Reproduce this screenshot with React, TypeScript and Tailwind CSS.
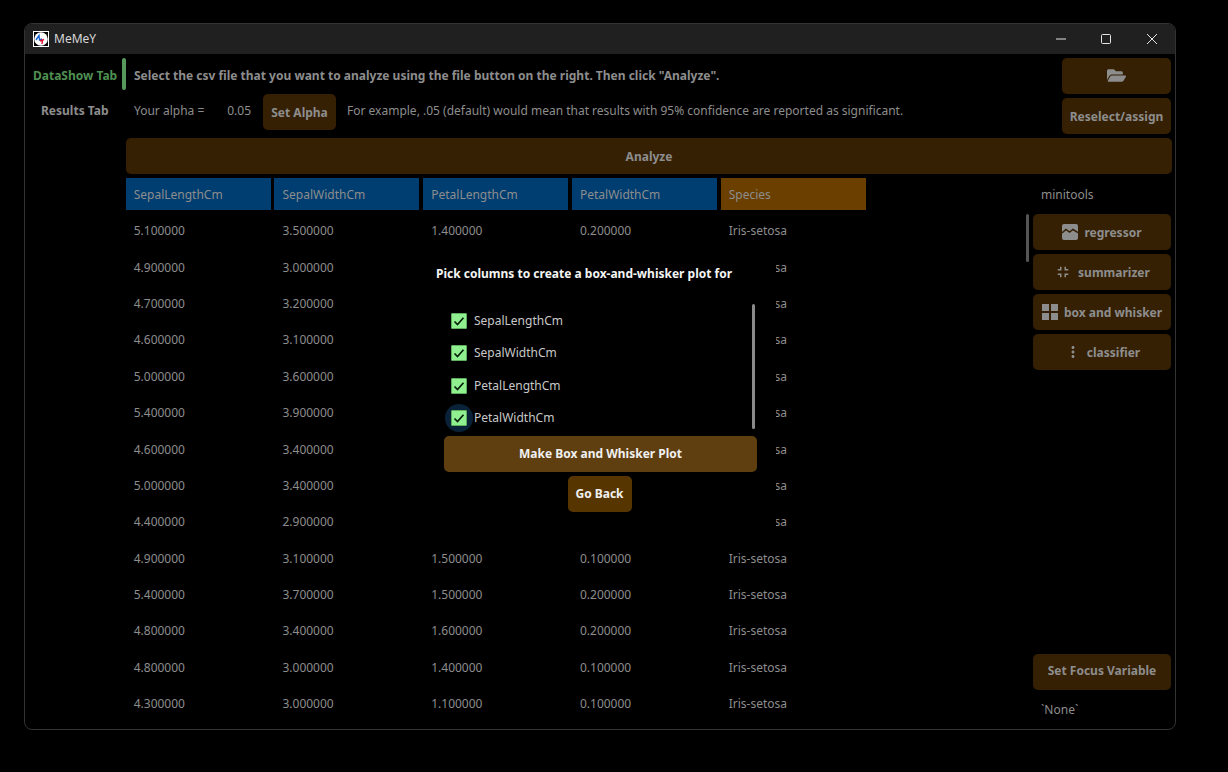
import { FaFolderOpen } from "react-icons/fa"
import { MdFullscreenExit, MdMoreVert } from "react-icons/md"
import type { ReactNode } from "react"

const columns = ["SepalLengthCm", "SepalWidthCm", "PetalLengthCm", "PetalWidthCm", "Species"]

// rows 1-8 have their petal values behind the dialog
const rows = [
  ["5.100000", "3.500000", "1.400000", "0.200000"],
  ["4.900000", "3.000000", "", ""],
  ["4.700000", "3.200000", "", ""],
  ["4.600000", "3.100000", "", ""],
  ["5.000000", "3.600000", "", ""],
  ["5.400000", "3.900000", "", ""],
  ["4.600000", "3.400000", "", ""],
  ["5.000000", "3.400000", "", ""],
  ["4.400000", "2.900000", "", ""],
  ["4.900000", "3.100000", "1.500000", "0.100000"],
  ["5.400000", "3.700000", "1.500000", "0.200000"],
  ["4.800000", "3.400000", "1.600000", "0.200000"],
  ["4.800000", "3.000000", "1.400000", "0.100000"],
  ["4.300000", "3.000000", "1.100000", "0.100000"],
]

function Logo() {
  return (
    <svg width="16" height="16" viewBox="0 0 16 16" className="shrink-0">
      <rect width="16" height="16" fill="#fff" />
      <rect x="1" y="1" width="14" height="14" fill="#000" />
      <circle cx="8" cy="8" r="6.8" fill="#fff" />
      <path d="M3 9 L6 4.5 L6.5 9 L9 8" stroke="#1763d0" strokeWidth="1.4" fill="none" />
      <path d="M7 10 L11 8.5 M9.5 9 L9 13" stroke="#e01030" strokeWidth="1.4" fill="none" />
    </svg>
  )
}

function ToolButton({ icon, label, gap }: { icon: ReactNode; label: string; gap: string }) {
  return (
    <button className={`h-9 w-full rounded-[5px] bg-[#352003] flex items-center justify-center font-bold text-[#8d8d8d] ${gap}`}>
      {icon}
      <span className="pt-[1px]">{label}</span>
    </button>
  )
}

function Check({ label, focused }: { label: string; focused?: boolean }) {
  return (
    <div className="flex h-[32.4px] items-center gap-[7px] pl-[7px]">
      <span className="relative flex h-4 w-4 items-center justify-center rounded-[1px] bg-[#90f090] border border-[#5fae5f]">
        {focused && <span className="absolute -inset-[7px] -z-10 rounded-full bg-[#0a2238]" />}
        <svg width="12" height="12" viewBox="0 0 12 12" className="relative">
          <path d="M1.5 6.5 L4.5 9.5 L10.5 2.8" stroke="#06210a" strokeWidth="1.7" fill="none" />
        </svg>
      </span>
      <span className="text-[#c8c8c8]">{label}</span>
    </div>
  )
}

export default function App() {
  return (
    <div className="h-[772px] w-[1228px] overflow-hidden bg-black pl-[24px] pt-[23px] font-['Noto_Sans',sans-serif] text-[12px] text-[#8d8d8d]">
      <div className="relative isolate flex h-[707px] w-[1152px] flex-col overflow-hidden rounded-lg border border-[#333] bg-black">
        {/* Title bar */}
        <div className="flex h-[30px] shrink-0 items-center bg-[#202020] pl-2">
          <Logo />
          <span className="ml-[5px] text-[#d8d8d8]">MeMeY</span>
          <div className="ml-auto flex items-center text-[#e4e4e4]">
            <svg width="46" height="30" viewBox="0 0 46 30"><path d="M19 15 H29" stroke="currentColor" /></svg>
            <svg width="46" height="30" viewBox="0 0 46 30"><rect x="18.5" y="10.5" width="9" height="9" rx="1" stroke="currentColor" fill="none" /></svg>
            <svg width="46" height="30" viewBox="0 0 46 30"><path d="M18 10 L28 20 M28 10 L18 20" stroke="currentColor" /></svg>
          </div>
        </div>

        {/* Top section */}
        <div className="flex pt-1 pr-[4px]">
          <div className="flex-1">
            <div className="flex h-9 items-start">
              <div className="w-[97px] pl-2 pt-[9px] text-right font-bold text-[#4f8f52] pr-[5px] whitespace-nowrap">DataShow Tab</div>
              <div className="h-8 w-1 rounded-sm bg-[#57985c]" />
              <div className="pl-2 pt-[9px] font-bold whitespace-nowrap">
                Select the csv file that you want to analyze using the file button on the right. Then click "Analyze".
              </div>
            </div>
            <div className="flex h-10 items-start">
              <div className="w-[101px] pt-[8px] pl-4 font-bold whitespace-nowrap">Results Tab</div>
              <div className="w-[137px] pl-2 pt-[8px] flex justify-between pr-[12px]">
                <span>Your alpha =</span>
                <span>0.05</span>
              </div>
              <button className="h-9 w-[73px] rounded-[5px] bg-[#352003] pt-[2px] font-bold">Set Alpha</button>
              <div className="pl-[11px] pt-[8px] whitespace-nowrap">
                For example, .05 (default) would mean that results with 95% confidence are reported as significant.
              </div>
            </div>
          </div>
          <div className="flex w-[109px] flex-col gap-1">
            <button className="flex h-9 items-center justify-center rounded-[5px] bg-[#352003] pb-[1px]">
              <FaFolderOpen size={19} />
            </button>
            <button className="h-9 rounded-[5px] bg-[#352003] pt-[2px] font-bold">Reselect/assign</button>
          </div>
        </div>

        {/* Analyze */}
        <div className="ml-[101px] mr-[3px] mt-[4px] flex h-9 items-center justify-center rounded-[5px] bg-[#352003] pt-[1px] font-bold">
          Analyze
        </div>

        {/* Table and tools */}
        <div className="relative flex flex-1 pt-[4px] pr-[4px]">
          <div className="ml-[100.7px] flex-1">
            <div className="flex gap-[3.75px]">
              {columns.map((c, i) => (
                <div
                  key={c}
                  className={`flex h-8 w-[145px] items-center pl-2 pt-[1px] ${i === 4 ? "bg-[#6a3f00]" : "bg-[#003d70]"}`}
                >
                  {c}
                </div>
              ))}
            </div>
            <div className="pt-[3px]">
              {rows.map((r, i) => (
                <div key={i} className="flex h-[36.4px] items-center gap-[3.75px]">
                  {r.map((v, j) => (
                    <div key={j} className="w-[145px] pl-2">{v}</div>
                  ))}
                  <div className="w-[145px] pl-2">Iris-setosa</div>
                </div>
              ))}
            </div>
          </div>

          <div className="relative flex w-[138px] flex-col">
            <div className="h-8 pl-2 pt-[1px] flex items-center">minitools</div>
            <div className="absolute left-[-7px] top-[36px] h-12 w-[3px] rounded-sm bg-[#555]" />
            <div className="mt-1 flex flex-col gap-1">
              <ToolButton
                gap="gap-[6px]"
                label="regressor"
                icon={
                  <svg width="16" height="16" viewBox="0 0 16 16">
                    <rect width="16" height="16" rx="2" fill="currentColor" />
                    <path d="M0 9 L4 5.5 L7.5 8 L11 5.5 L16 8.5" stroke="#352003" strokeWidth="1.5" fill="none" />
                  </svg>
                }
              />
              <ToolButton gap="gap-[6px]" label="summarizer" icon={<MdFullscreenExit size={18} />} />
              <ToolButton
                gap="gap-[6px]"
                label="box and whisker"
                icon={
                  <svg width="16" height="16" viewBox="0 0 16 16" fill="currentColor">
                    <rect width="7" height="7" />
                    <rect x="9" width="7" height="7" />
                    <rect y="9" width="7" height="7" />
                    <rect x="9" y="9" width="7" height="7" />
                  </svg>
                }
              />
              <ToolButton gap="gap-[5px]" label="classifier" icon={<MdMoreVert size={18} />} />
            </div>
            <div className="mt-auto mb-[1px]">
              <button className="h-9 w-full rounded-[5px] bg-[#352003] pb-[2px] font-bold">Set Focus Variable</button>
              <div className="h-[38px] pl-2 pt-[11px]">`None`</div>
            </div>
          </div>
        </div>

        {/* Box and whisker dialog */}
        <div className="absolute left-[403px] top-[226px] z-10 h-[290px] w-[348px] bg-black pl-[8px] pt-[14px]">
          <div className="pt-[1px] font-bold text-[#f4f4f4] whitespace-nowrap">Pick columns to create a box-and-whisker plot for</div>
          <div className="relative ml-[8px] mt-[21px] h-[132px] w-[312px] pt-[0.6px]">
            {columns.slice(0, 3).map((c) => (
              <Check key={c} label={c} />
            ))}
            <Check label="PetalWidthCm" focused />
            <div className="absolute right-[1px] top-0 h-[125px] w-[3px] rounded-sm bg-[#8a8a8a]" />
          </div>
          <button className="ml-[8px] h-9 w-[313px] rounded-[5px] bg-[#5f3f10] font-bold text-[#f0f0f0]">
            Make Box and Whisker Plot
          </button>
          <div className="ml-[7px] mt-1 flex w-[313px] justify-center">
            <button className="h-9 w-16 rounded-[5px] bg-[#573500] font-bold text-[#f0f0f0]">Go Back</button>
          </div>
        </div>
      </div>
    </div>
  )
}
